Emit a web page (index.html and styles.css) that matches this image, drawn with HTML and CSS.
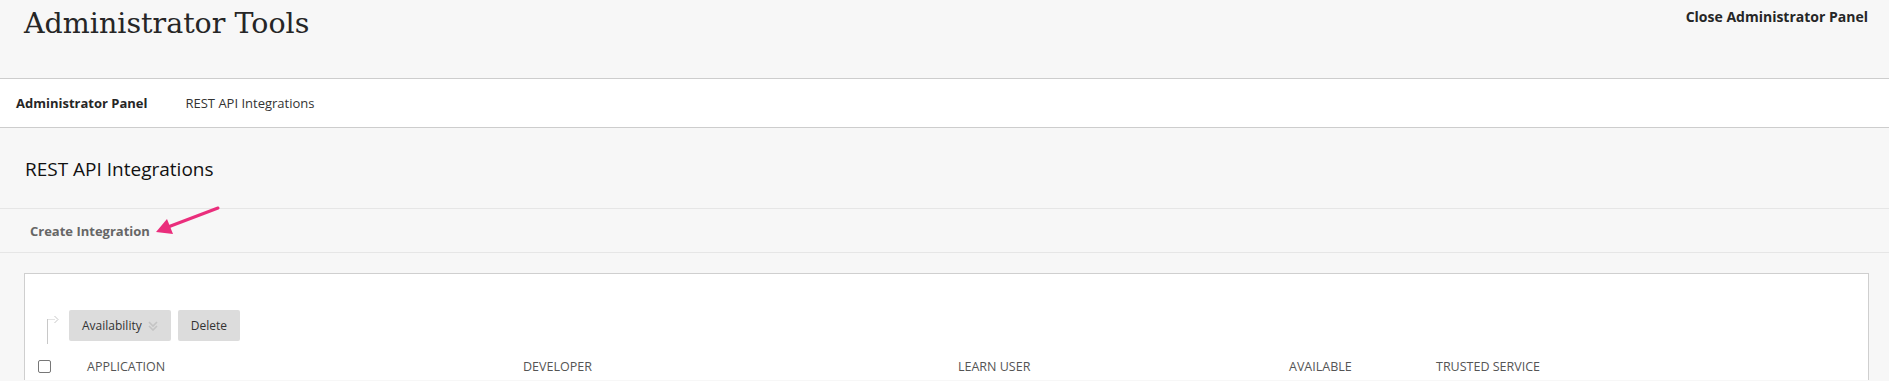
FILE: index.html
```html
<!DOCTYPE html>
<html lang="en">

<head>
    <meta charset="UTF-8">
    <meta name="viewport" content="width=device-width, initial-scale=1.0">
    <title>Administrator Tools</title>
    <link rel="stylesheet" href="styles.css">
</head>

<body>
    <header class="top-header">
        <h1>Administrator Tools</h1>
        <a class="close-link" href="#">Close Administrator Panel</a>
    </header>

    <nav class="breadcrumbs">
        <span class="crumb crumb-root">Administrator Panel</span>
        <span class="crumb">REST API Integrations</span>
    </nav>

    <main class="page">
        <h2 class="page-title">REST API Integrations</h2>

        <div class="action-bar">
            <a class="action-link" href="#">Create Integration</a>
            <!-- pointer annotation -->
            <svg class="annotation" width="70" height="34" viewBox="0 0 70 34">
                <line x1="66" y1="3" x2="16" y2="22" stroke="#ea2e7c" stroke-width="3" stroke-linecap="round" />
                <polygon points="4,27 15,14 21,29" fill="#ea2e7c" />
            </svg>
        </div>

        <section class="list-box">
            <div class="toolbar">
                <svg class="select-hint" width="14" height="30" viewBox="0 0 14 30">
                    <line x1="2.5" y1="5" x2="2.5" y2="30" stroke="#c8c8c8" stroke-width="1" />
                    <line x1="2.5" y1="5.5" x2="10" y2="5.5" stroke="#c8c8c8" stroke-width="1" stroke-dasharray="1 1" />
                    <polyline points="9.5,2 13,5.5 9.5,9" fill="none" stroke="#c8c8c8" stroke-width="1" />
                </svg>
                <button class="tool-btn">Availability
                    <svg class="chev" width="10" height="10" viewBox="0 0 10 10">
                        <polyline points="1,1 5,5 9,1" fill="none" stroke="#c4c4c4" stroke-width="1.6" />
                        <polyline points="1,5 5,9 9,5" fill="none" stroke="#c4c4c4" stroke-width="1.6" />
                    </svg>
                </button>
                <button class="tool-btn">Delete</button>
            </div>

            <div class="list-head">
                <span class="check"></span>
                <span>Application</span>
                <span>Developer</span>
                <span>Learn User</span>
                <span>Available</span>
                <span>Trusted Service</span>
            </div>
        </section>
    </main>
</body>

</html>
```

FILE: styles.css
```css
body {
    margin: 0;
    font-family: "Open Sans", Arial, sans-serif;
    color: #222;
    background-color: #f7f7f7;
}

.top-header {
    height: 78px;
    display: flex;
    justify-content: space-between;
    align-items: flex-start;
    background-color: #f7f7f7;
    border-bottom: 1px solid #cdcdcd;
    padding: 0 21px 0 24px;
}

.top-header h1 {
    margin: 7px 0 0;
    font-family: "DejaVu Serif", "Liberation Serif", serif;
    font-weight: normal;
    font-size: 28.5px;
    color: #262626;
}

.close-link {
    margin-top: 7px;
    font-size: 14px;
    font-weight: bold;
    color: #262626;
    text-decoration: none;
}

.breadcrumbs {
    height: 48px;
    display: flex;
    align-items: center;
    gap: 38px;
    padding-left: 16px;
    background-color: #fff;
    border-bottom: 1px solid #cdcdcd;
    font-size: 13px;
    color: #333;
}

.crumb-root {
    font-weight: bold;
    color: #262626;
}

.page {
    background-color: #f7f7f7;
}

.page-title {
    margin: 0;
    height: 81px;
    box-sizing: border-box;
    padding: 28px 0 0 25px;
    font-size: 19px;
    font-weight: normal;
    color: #111;
    border-bottom: 1px solid #e6e6e6;
}

.action-bar {
    position: relative;
    height: 43px;
    display: flex;
    align-items: center;
    padding-left: 30px;
    border-bottom: 1px solid #e6e6e6;
}

.action-link {
    font-size: 13px;
    font-weight: bold;
    color: #666;
    text-decoration: none;
}

.annotation {
    position: absolute;
    left: 152px;
    top: -4px;
}

.list-box {
    margin: 20px 20px 0 24px;
    background-color: #fff;
    border: 1px solid #cfcfcf;
    border-bottom: none;
    height: 106px;
}

.toolbar {
    display: flex;
    align-items: flex-end;
    gap: 7px;
    padding: 36px 0 0 20px;
}

.select-hint {
    margin-right: 3px;
    margin-bottom: -3px;
}

.tool-btn {
    height: 31px;
    padding: 0 13px;
    border: none;
    border-radius: 2px;
    background-color: #dcdcdc;
    font-family: "Open Sans", Arial, sans-serif;
    font-size: 12px;
    color: #333;
    display: flex;
    align-items: center;
    gap: 6px;
    cursor: pointer;
}

.list-head {
    display: grid;
    grid-template-columns: 49px 436px 435px 331px 147px auto;
    align-items: center;
    padding: 17px 0 0 13px;
    font-size: 12.5px;
    text-transform: uppercase;
    color: #555;
}

.check {
    width: 11px;
    height: 11px;
    border: 1px solid #777;
    border-radius: 2px;
}
```
